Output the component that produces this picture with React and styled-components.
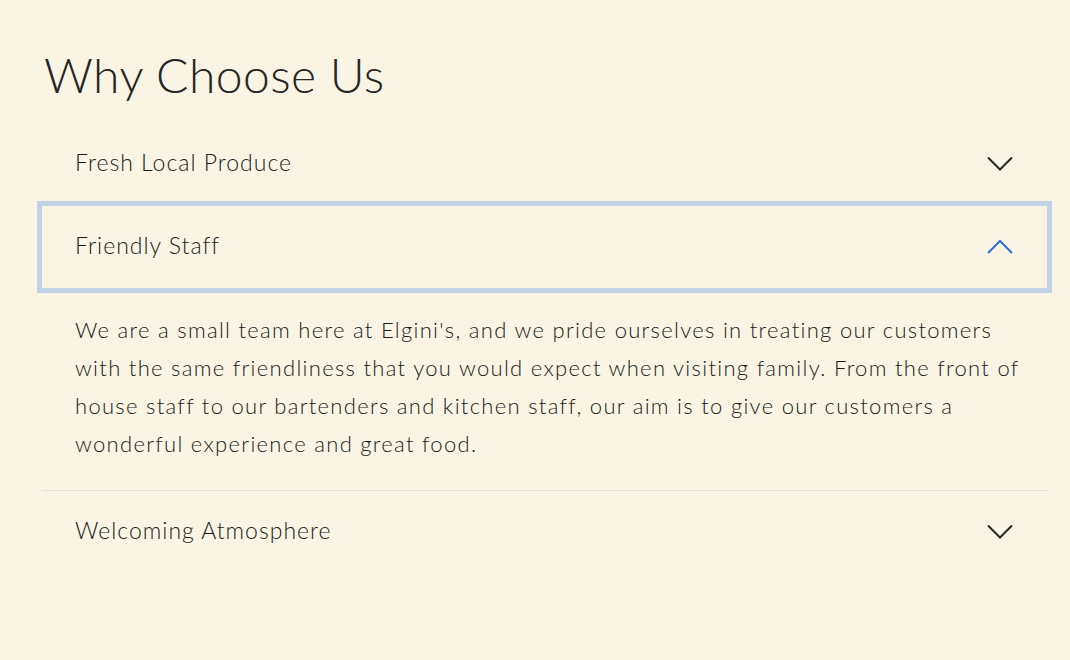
import React, { useState } from "react";
import styled, { createGlobalStyle } from "styled-components";

const GlobalStyle = createGlobalStyle`
  body {
    margin: 0;
    background: #f9f4e3;
    font-family: "Lato", "Open Sans", sans-serif;
    color: #242424;
  }
`;

const items = [
  {
    title: "Fresh Local Produce",
    body: "We source our ingredients from local farms and markets, so every dish is made with produce at its freshest.",
  },
  {
    title: "Friendly Staff",
    body: "We are a small team here at Elgini's, and we pride ourselves in treating our customers with the same friendliness that you would expect when visiting family. From the front of house staff to our bartenders and kitchen staff, our aim is to give our customers a wonderful experience and great food.",
  },
  {
    title: "Welcoming Atmosphere",
    body: "Whether you are stopping by for a quick drink or a long dinner, our dining room is a warm place to relax.",
  },
];

function Chevron({ open }) {
  return (
    <Icon viewBox="0 0 26 15" open={open}>
      {open ? (
        <path d="M1 14 L13 2 L25 14" />
      ) : (
        <path d="M1 1.5 L13 13.5 L25 1.5" />
      )}
    </Icon>
  );
}

function App() {
  const [open, setOpen] = useState(1);

  return (
    <>
      <GlobalStyle />
      <Section>
        <Heading>Why Choose Us</Heading>
        <Accordion>
          {items.map((item, i) => (
            <Item key={item.title} last={i === items.length - 1}>
              <Trigger
                focused={open === i}
                onClick={() => setOpen(open === i ? -1 : i)}
              >
                <Label>{item.title}</Label>
                <Chevron open={open === i} />
              </Trigger>
              {open === i && <Content>{item.body}</Content>}
            </Item>
          ))}
        </Accordion>
      </Section>
    </>
  );
}

const Section = styled.section`
  padding: 41px 23px 0 42px;
`;

const Heading = styled.h2`
  margin: 0 0 15px 2px;
  font-family: "Lato", sans-serif;
  font-weight: 300;
  font-size: 48px;
  line-height: 67px;
  letter-spacing: 0.4px;
  color: #262626;
`;

const Accordion = styled.div`
  display: flex;
  flex-direction: column;
`;

const Item = styled.div`
  border-bottom: ${(p) => (p.last ? "none" : "1px solid #e4e1da")};
`;

const Trigger = styled.button`
  width: 100%;
  height: 82px;
  padding: 0 34px 0 33px;
  display: flex;
  align-items: center;
  justify-content: space-between;
  background: transparent;
  border: none;
  outline: ${(p) => (p.focused ? "5px solid #c1d2e7" : "none")};
  cursor: pointer;
  text-align: left;
`;

const Label = styled.span`
  margin-bottom: 5px;
  font-family: "Lato", sans-serif;
  font-weight: 300;
  font-size: 23px;
  letter-spacing: 1px;
  color: #1c1c1c;
`;

const Icon = styled.svg`
  width: 26px;
  height: 15px;
  margin-bottom: 2px;
  fill: none;
  stroke: ${(p) => (p.open ? "#2d6fdc" : "#262626")};
  stroke-width: 2;
`;

const Content = styled.p`
  margin: 0;
  padding: 23px 24px 27px 33px;
  font-family: "Lato", sans-serif;
  font-weight: 300;
  font-size: 22px;
  line-height: 38px;
  letter-spacing: 1.3px;
  color: #1c1c1c;
`;

export default App;
